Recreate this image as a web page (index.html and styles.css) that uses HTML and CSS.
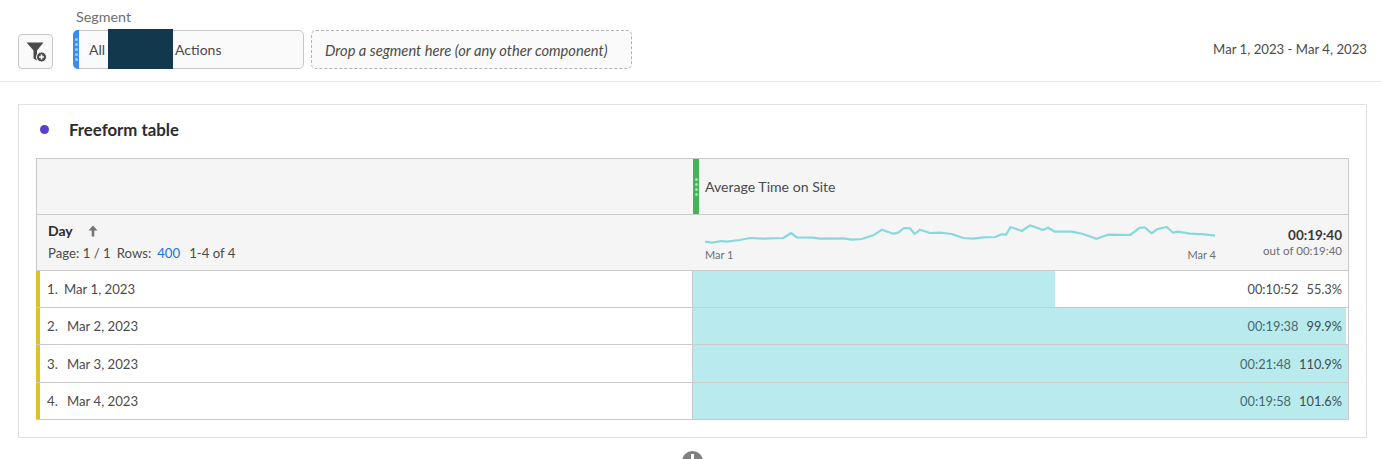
FILE: index.html
```html
<!DOCTYPE html>
<html lang="en">
<head>
<meta charset="utf-8">
<title>Freeform table</title>
<link rel="stylesheet" href="styles.css">
</head>
<body>
<header class="topbar">
  <button class="filter-btn" type="button" aria-label="Add segment">
    <svg width="24" height="24" viewBox="0 0 24 24">
      <path class="ico" d="M2.500 2.500H19.500L13 10.500V20.500L9.500 18.500V10.500Z"/>
      <circle class="ico-c" cx="17.500" cy="17" r="5"/>
      <path class="ico-plus" d="M15 17H20M17.500 14.500V19.500"/>
    </svg>
  </button>
  <div class="segment-group">
    <div class="segment-label">Segment</div>
    <div class="segment-row">
      <div class="pill">
        <span class="grip grip-blue"><i></i><i></i><i></i><i></i><i></i></span>
        <span class="pill-all">All</span>
        <span class="redact"></span>
        <span class="pill-actions">Actions</span>
      </div>
      <div class="dropzone">Drop a segment here (or any other component)</div>
    </div>
  </div>
  <div class="daterange">Mar 1, 2023 - Mar 4, 2023</div>
</header>

<section class="panel">
  <h2 class="panel-title"><span class="dot"></span>Freeform table</h2>
  <div class="table">
    <div class="row head-metric">
      <div class="cell-left"></div>
      <div class="cell-right metric-name">
        <span class="grip grip-green"><i></i><i></i><i></i><i></i></span>
        <span>Average Time on Site</span>
      </div>
    </div>
    <div class="row head-summary">
      <div class="cell-left dim">
        <div class="dim-title"><b>Day</b>
          <svg class="sort" width="10" height="12" viewBox="0 0 10 12"><path d="M5 0.500L9.500 5.500H6.300V11.500H3.700V5.500H0.500Z"/></svg>
        </div>
        <div class="dim-page"><span>Page: 1 / 1</span><span>Rows:</span><a class="rows-link">400</a><span>1-4 of 4</span></div>
      </div>
      <div class="cell-right summary">
        <div class="spark">
          <svg width="512" height="24" viewBox="705 221 512 24">
            <polyline class="spark-line" points="705,240.700 711.700,241.700 721.700,240 726.700,240.700 740,239 750,237 763.300,237.700 783.300,237 791,232 796.700,236.300 813.300,236.700 820,237.700 843.300,237.300 851.700,238.700 861.700,238 873.300,234.300 882,228.700 893.300,232.700 898.300,231.700 904,227 910,227.300 914.700,233 920,228.700 930,232 940,231.700 951.700,233 963.300,237 973.300,237.700 983.300,236.300 995,236 1001.700,233.300 1006,233.700 1010.700,226 1021.700,230 1030,224.300 1043,229 1048,226.700 1055,230.700 1071.700,230.700 1083,233 1096.700,237.700 1108,233.700 1130,234 1140,226.700 1145,226.700 1151.700,232.300 1156.700,228.300 1166.700,226 1173,231.700 1178,230.700 1190,232.700 1205,233.300 1215,234.700"/>
          </svg>
          <div class="spark-dates"><span>Mar 1</span><span>Mar 4</span></div>
        </div>
        <div class="totals">
          <div class="total-main">00:19:40</div>
          <div class="total-sub">out of 00:19:40</div>
        </div>
      </div>
    </div>
    <div class="row data r37">
      <div class="cell-left label"><span class="num n1">1.</span><span>Mar 1, 2023</span></div>
      <div class="cell-right value"><div class="bar" style="width:55.300%"></div><span class="time">00:10:52</span><span class="pct">55.3%</span></div>
    </div>
    <div class="row data r37">
      <div class="cell-left label"><span class="num">2.</span><span>Mar 2, 2023</span></div>
      <div class="cell-right value on-bar"><div class="bar" style="width:99.700%"></div><span class="time">00:19:38</span><span class="pct">99.9%</span></div>
    </div>
    <div class="row data r38">
      <div class="cell-left label"><span class="num">3.</span><span>Mar 3, 2023</span></div>
      <div class="cell-right value on-bar"><div class="bar" style="width:100%"></div><span class="time">00:21:48</span><span class="pct">110.9%</span></div>
    </div>
    <div class="row data r38">
      <div class="cell-left label"><span class="num">4.</span><span>Mar 4, 2023</span></div>
      <div class="cell-right value on-bar"><div class="bar" style="width:100%"></div><span class="time">00:19:58</span><span class="pct">101.6%</span></div>
    </div>
  </div>
</section>
<div class="add-wrap"><div class="add-btn"></div></div>
</body>
</html>
```
FILE: styles.css
```css
* { box-sizing: border-box; }
html, body { height: 459px; overflow: hidden; }
body {
  margin: 0;
  background: #fff;
  color: #4b4b4b;
  font-family: Lato, "Open Sans", sans-serif;
  font-size: 13px;
}
.topbar {
  height: 82px;
  border-bottom: 1px solid #e6e6e6;
  padding: 9px 14px 0 18px;
  display: flex;
  align-items: flex-start;
}
.filter-btn {
  width: 35px;
  height: 35px;
  margin-top: 25px;
  margin-right: 20px;
  padding: 0;
  background: #fafafa;
  border: 1px solid #c8c8c8;
  border-radius: 4px;
  display: flex;
  align-items: center;
  justify-content: center;
}
.ico { fill: #4b4b4b; }
.ico-c { fill: #4b4b4b; stroke: #fafafa; stroke-width: 1; }
.ico-plus { stroke: #fff; stroke-width: 1.600; fill: none; }
.segment-group { flex: 1; }
.segment-label { height: 21px; padding-left: 3px; line-height: 15px; font-size: 14.300px; color: #6e6e6e; }
.segment-row { display: flex; gap: 7px; }
.pill {
  width: 231px;
  height: 39px;
  background: #fafafa;
  border: 1px solid #c8c8c8;
  border-radius: 5px;
  display: flex;
  align-items: center;
  font-size: 14px;
  color: #4b4b4b;
}
.grip {
  display: flex;
  flex-direction: column;
  align-items: center;
  justify-content: center;
  gap: 2px;
  align-self: stretch;
  flex: none;
}
.grip i { width: 3px; height: 3px; border-radius: 50%; }
.grip-blue {
  width: 6px;
  margin: -1px 0 -1px -1px;
  background: #378ef0;
  border-radius: 5px 0 0 5px;
}
.grip-blue i { background: #a6cdf8; }
.pill-all { margin-left: 10px; }
.redact {
  width: 65px;
  align-self: stretch;
  margin: -2px 2px -1px 3px;
  background: #12384d;
}
.dropzone {
  width: 321px;
  height: 39px;
  padding-left: 13px;
  border: 1px dashed #b3b3b3;
  border-radius: 5px;
  background: #fafafa;
  font-style: italic;
  font-size: 14.700px;
  display: flex;
  align-items: center;
}
.daterange { margin-top: 32px; font-size: 13.200px; color: #4b4b4b; }

.panel {
  width: 1349px;
  height: 334px;
  margin: 22px 0 0 18px;
  border: 1px solid #e1e1e1;
  padding: 0 17px;
}
.panel-title {
  height: 53px;
  margin: 0;
  padding: 0 0 4px 4px;
  display: flex;
  align-items: center;
  font-size: 16.800px;
  font-weight: 700;
  color: #2c2c2c;
}
.dot {
  width: 9px;
  height: 9px;
  margin-right: 20px;
  border-radius: 50%;
  background: #5c3fd1;
}
.table {
  width: 1313px;
  border: 1px solid #cacaca;
}
.row { display: flex; border-bottom: 1px solid #cacaca; }
.row:last-child { border-bottom: 0; }
.cell-left { width: 656px; flex: none; border-right: 1px solid #cacaca; }
.cell-right { flex: 1; min-width: 0; }
.head-metric { height: 56px; background: #f5f5f5; }
.head-metric .cell-left { border-right: 0; }
.metric-name { display: flex; align-items: center; font-size: 14.100px; color: #4b4b4b; }
.grip-green { width: 6px; background: #44b556; margin-right: 6px; }
.grip-green i { background: #a5dfae; }
.head-summary { height: 56px; background: #f5f5f5; }
.head-summary .cell-left { border-right: 0; }
.dim { padding: 5px 0 0 11px; }
.dim-title { height: 21px; display: flex; align-items: center; gap: 15px; font-size: 14px; color: #2c2c2c; }
.sort { fill: #757575; }
.dim-page { display: flex; gap: 6px; margin-top: 4px; font-size: 13.200px; }
.dim-page .rows-link { color: #1473e6; margin-right: 3px; margin-left: 0; }
.summary { display: flex; padding-right: 6px; position: relative; }
.spark { width: 512px; margin-left: 12px; margin-top: 7px; flex: none; }
.spark svg { display: block; }
.spark-line { fill: none; stroke: #86dade; stroke-width: 2.200; stroke-linejoin: round; }
.spark-dates { display: flex; justify-content: space-between; font-size: 11px; color: #6e6e6e; margin-top: 2px; padding-right: 1px; }
.totals { flex: 1; text-align: right; padding-top: 12px; }
.total-main { font-weight: 700; font-size: 13.500px; color: #3a3a3a; line-height: 16px; }
.total-sub { font-size: 11.500px; color: #6e6e6e; line-height: 16px; }
.r37 { height: 37px; }
.r38 { height: 38px; }
.data:last-child { height: 36px; }
.label {
  border-left: 4px solid #dcc427;
  margin-left: -1px;
  width: 657px;
  display: flex;
  align-items: center;
  padding-left: 7px;
  font-size: 13.200px;
}
.num { width: 20px; }
.num.n1 { width: 17px; }
.value {
  position: relative;
  display: flex;
  align-items: center;
  justify-content: flex-end;
  padding-right: 6px;
  gap: 8px;
  font-size: 12.800px;
}
.bar { position: absolute; left: 0; top: 0; bottom: 0; background: #b9ebee; }
.time, .pct { position: relative; }
.on-bar .time { color: #45696f; }
.on-bar .pct { color: #3c4e50; }
.add-wrap { display: flex; justify-content: center; padding: 13px 0 0 3px; }
.add-btn { width: 21px; height: 21px; border-radius: 50%; background: #808080; position: relative; flex: none; }
.add-btn::after { content: ""; position: absolute; left: 9px; top: 3px; width: 3px; height: 14px; background: #fff; }
```
